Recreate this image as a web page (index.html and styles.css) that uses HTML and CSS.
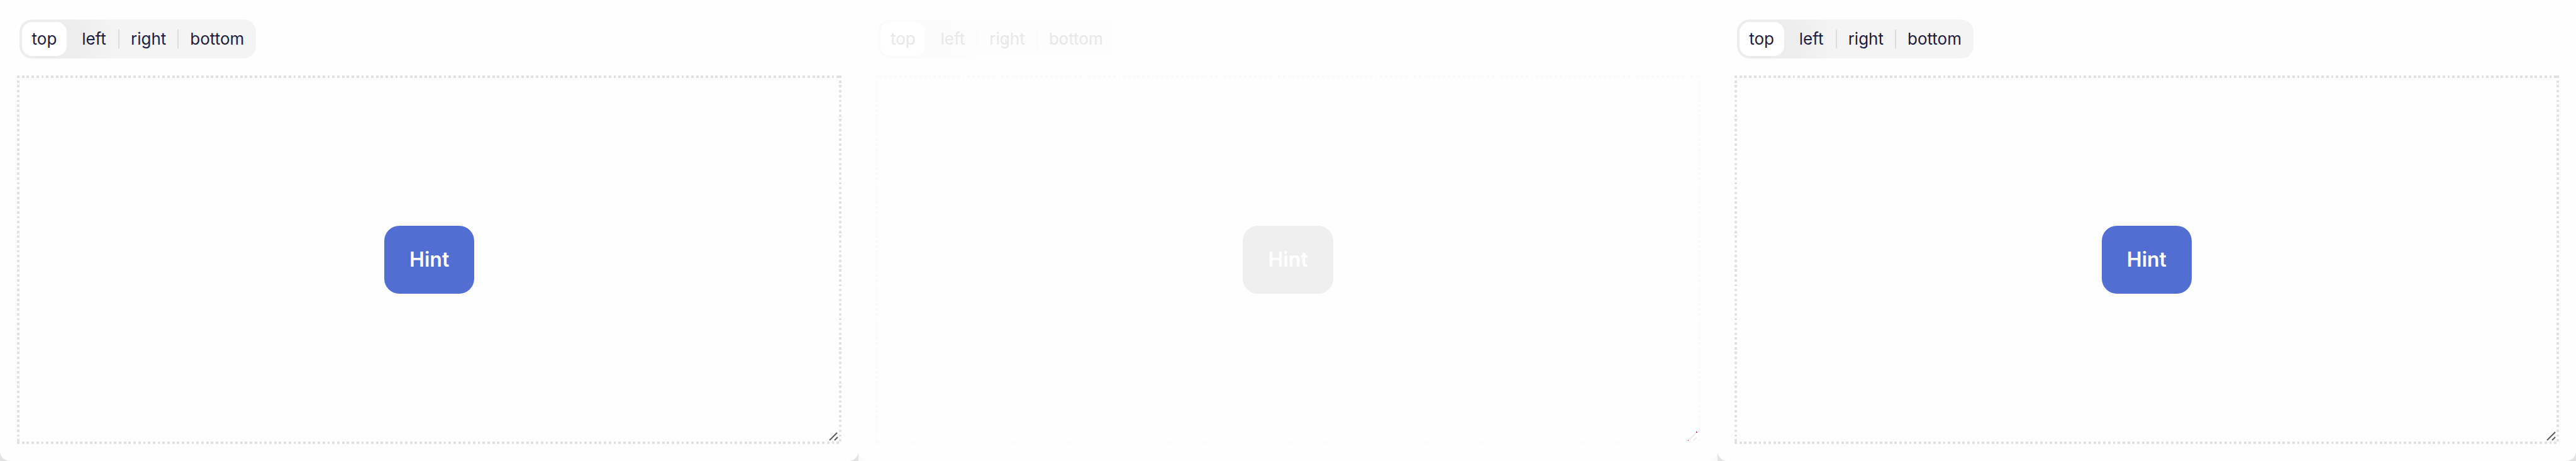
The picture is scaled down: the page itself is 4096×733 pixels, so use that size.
FILE: index.html
```html
<!DOCTYPE html>
<html lang="en">
<head>
<meta charset="utf-8">
<title>Hint position</title>
<link rel="stylesheet" href="styles.css">
</head>
<body>
<main class="panels">
  <div class="frame">
    <section class="panel">
      <div class="segments" role="radiogroup" aria-label="Position">
        <label class="segment"><input type="radio" name="pos-a" checked><span>top</span></label>
        <label class="segment"><input type="radio" name="pos-a"><span>left</span></label>
        <label class="segment divided"><input type="radio" name="pos-a"><span>right</span></label>
        <label class="segment divided"><input type="radio" name="pos-a"><span>bottom</span></label>
      </div>
      <div class="stage">
        <button class="hint" type="button">Hint</button>
        <svg class="grip" viewBox="0 0 16 16" aria-hidden="true"><path d="M1 14 13 2M9 14 14 9"/></svg>
      </div>
    </section>
  </div>
  <div class="frame faded">
    <section class="panel">
      <div class="segments" role="radiogroup" aria-label="Position">
        <label class="segment"><input type="radio" name="pos-b" checked><span>top</span></label>
        <label class="segment"><input type="radio" name="pos-b"><span>left</span></label>
        <label class="segment divided"><input type="radio" name="pos-b"><span>right</span><i class="mark"></i></label>
        <label class="segment divided"><input type="radio" name="pos-b"><span>bottom</span></label>
      </div>
      <div class="stage">
        <button class="hint" type="button">Hint</button>
        <svg class="grip" viewBox="0 0 16 16" aria-hidden="true"><path d="M1 14 13 2M9 14 14 9"/><path class="changed" d="M0 14h1v1h-1zM13 0h1v1h1v1h-2z"/></svg>
      </div>
    </section>
  </div>
  <div class="frame">
    <section class="panel">
      <div class="segments" role="radiogroup" aria-label="Position">
        <label class="segment"><input type="radio" name="pos-c" checked><span>top</span></label>
        <label class="segment"><input type="radio" name="pos-c"><span>left</span></label>
        <label class="segment divided"><input type="radio" name="pos-c"><span>right</span></label>
        <label class="segment divided"><input type="radio" name="pos-c"><span>bottom</span></label>
      </div>
      <div class="stage">
        <button class="hint" type="button">Hint</button>
        <svg class="grip" viewBox="0 0 16 16" aria-hidden="true"><path d="M1 14 14 1M9 14 14 9"/></svg>
      </div>
    </section>
  </div>
</main>
</body>
</html>
```

FILE: styles.css
```css
* { box-sizing: border-box; }

body {
  margin: 0;
  font-family: Inter, "Liberation Sans", sans-serif;
}

.panels {
  display: grid;
  grid-template-columns: repeat(3, 1fr);
  min-height: 100vh;
}

.frame {
  --ink: #1d1d41;
  --track: #f4f4f4;
  --shade: #ededed;
  --rule: #dcdcdc;
  --dot: #e2e2e2;
  --accent: #526ed3;
  --grip: #5c5c5c;
  display: flex;
  background: #e4e4e4;
}

.faded {
  --ink: #e8e8e8;
  --track: #fdfdfd;
  --shade: #fbfbfb;
  --rule: #fafafa;
  --dot: #fbfbfb;
  --accent: #efefef;
  --grip: #ececec;
  background: #fbfbfb;
}

.panel {
  flex: 1;
  display: flex;
  flex-direction: column;
  gap: 27px;
  padding: 31px 27px 27px;
  background: #fefefe;
  border-radius: 0 0 16px 16px;
}

.segments {
  display: flex;
  align-self: flex-start;
  gap: 8px;
  height: 62px;
  margin-left: 4px;
  padding: 4px;
  border-radius: 20px;
  background: radial-gradient(circle at 42px 50%, var(--shade) 0 50px, var(--track) 112px);
}

.segment {
  position: relative;
  display: flex;
  align-items: center;
  justify-content: center;
  min-width: 71px;
  padding: 0 15px;
  border-radius: 16px;
  color: var(--ink);
  font-size: 26px;
  line-height: 32px;
  cursor: pointer;
}

.segment input {
  position: absolute;
  inset: 0;
  margin: 0;
  opacity: 0;
}

.segment:has(input:checked) { background: #fff; }

.divided::before {
  content: "";
  position: absolute;
  left: -5px;
  top: 12px;
  bottom: 12px;
  width: 2px;
  background: var(--rule);
}

.mark {
  position: absolute;
  left: 41px;
  top: 27px;
  width: 1px;
  height: 6px;
  background: #ff0;
}

.stage {
  --across: repeating-linear-gradient(90deg, var(--dot) 0 calc(100% / 340), transparent calc(100% / 340) calc(100% / 170));
  --down: repeating-linear-gradient(180deg, var(--dot) 0 calc(100% / 152), transparent calc(100% / 152) calc(100% / 76));
  flex: 1;
  position: relative;
  display: flex;
  align-items: center;
  justify-content: center;
  background:
    var(--across) top / 100% 4px no-repeat,
    var(--across) bottom / 100% 4px no-repeat,
    var(--down) left / 4px 100% no-repeat,
    var(--down) right / 4px 100% no-repeat;
}

.hint {
  padding: 34px 40px;
  border: 0;
  border-radius: 24px;
  background: var(--accent);
  color: #fff;
  font: 600 32px/40px Inter, "Liberation Sans", sans-serif;
}

.grip {
  position: absolute;
  right: 4px;
  bottom: 4px;
  width: 16px;
  height: 16px;
  fill: none;
  stroke: var(--grip);
  stroke-width: 2;
}

.changed {
  fill: #f00;
  stroke: none;
}
```
